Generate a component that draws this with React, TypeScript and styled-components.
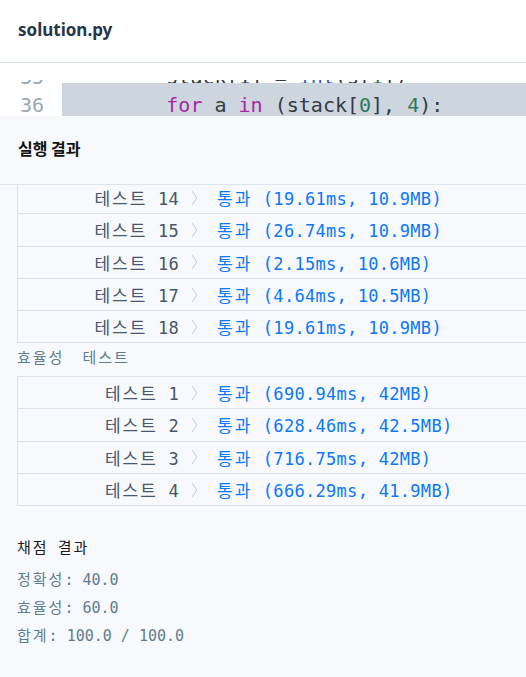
import React from 'react';
import styled, { createGlobalStyle } from 'styled-components';

const GlobalStyle = createGlobalStyle`
    html, body {
        margin: 0;
        padding: 0;
        background: #f8f9fc;
        overflow: hidden;
    }
`;

const MONO = `"DejaVu Sans Mono", "Noto Sans CJK KR", monospace`;

const Page = styled.div`
    width: 526px;
    height: 677px;
    display: flex;
    flex-direction: column;
    overflow: hidden;
`;

const FileHeader = styled.div`
    height: 63px;
    flex-shrink: 0;
    display: flex;
    align-items: center;
    padding: 0 18px 4px;
    box-sizing: border-box;
    background: #fff;
    border-bottom: 1px solid #d7e2eb;
    font-family: "Noto Sans", "Noto Sans CJK KR", sans-serif;
    font-size: 17px;
    font-weight: 700;
    color: #263747;
`;

const CodeSection = styled.div`
    flex-shrink: 0;
    background: #fff;
    padding-top: 17px;
`;

const CodeViewport = styled.div`
    height: 36px;
    overflow: hidden;
`;

// scrolled so that only the bottom of line 35 shows
const CodeLines = styled.div`
    margin-top: -17px;
    font-family: ${MONO};
    font-size: 20px;
    line-height: 28px;
    color: #333a42;
`;

const CodeRow = styled.div`
    display: flex;
`;

const Gutter = styled.div`
    width: 62px;
    flex-shrink: 0;
    box-sizing: border-box;
    padding-right: 18px;
    text-align: right;
    color: #9aa8b6;
`;

const CodeText = styled.div<{ $active?: boolean }>`
    flex: 1;
    padding-left: 8px;
    white-space: pre;
    background: ${(p) => (p.$active ? '#cdd6df' : 'transparent')};
    margin-top: ${(p) => (p.$active ? '-8px' : '0')};
    padding-top: ${(p) => (p.$active ? '8px' : '0')};
`;

const Kw = styled.span`
    color: #a626a4;
`;

const Num = styled.span`
    color: #2b7a57;
`;

const Builtin = styled.span`
    color: #2f5fa8;
`;

const ResultPanel = styled.div`
    flex: 1;
    display: flex;
    flex-direction: column;
    background: #f8f9fc;
    min-height: 0;
`;

const ResultHeader = styled.div`
    height: 69px;
    flex-shrink: 0;
    display: flex;
    align-items: center;
    padding: 0 18px 4px;
    box-sizing: border-box;
    border-bottom: 1px solid #dde4ec;
    font-family: "Noto Sans CJK KR", sans-serif;
    font-size: 16px;
    font-weight: 700;
    color: #111;
`;

const ResultBody = styled.div`
    flex: 1;
    overflow: hidden;
    padding-left: 17px;
    font-family: ${MONO};
`;

const ResultScroll = styled.div`
    margin-top: -4px;
`;

const Hangul = styled.span<{ $gap?: number }>`
    letter-spacing: ${(p) => p.$gap ?? 2}px;
`;

const TestBox = styled.div`
    border: 1px solid #d7e2eb;
    border-right: none;
`;

const TestRow = styled.div`
    display: grid;
    grid-template-columns: 161px 38px 1fr;
    align-items: center;
    height: 32.3px;
    box-sizing: border-box;
    border-bottom: 1px solid #d7e2eb;
    font-size: 17px;
    letter-spacing: 0.3px;
    white-space: pre;
    &:last-child {
        border-bottom: none;
        height: 31.3px;
    }
`;

const TestName = styled.div`
    text-align: right;
    color: #44576c;
`;

const Chevron = styled.div`
    display: flex;
    padding-left: 12px;
`;

const TestResult = styled.div`
    color: #0a78fa;
`;

const GroupLabel = styled.div`
    height: 32.5px;
    line-height: 30px;
    font-size: 15px;
    white-space: pre;
    color: #5f7d90;
`;

const ScoreTitle = styled.div`
    margin-top: 28px;
    margin-bottom: 4px;
    line-height: 28px;
    font-size: 15px;
    white-space: pre;
    color: #1b1b1b;
`;

const ScoreLine = styled.div`
    line-height: 28px;
    font-size: 15px;
    white-space: pre;
    color: #5f7d90;
`;

const accuracyTests = [
    { no: 14, result: '(19.61ms, 10.9MB)' },
    { no: 15, result: '(26.74ms, 10.9MB)' },
    { no: 16, result: '(2.15ms, 10.6MB)' },
    { no: 17, result: '(4.64ms, 10.5MB)' },
    { no: 18, result: '(19.61ms, 10.9MB)' },
];

const efficiencyTests = [
    { no: 1, result: '(690.94ms, 42MB)' },
    { no: 2, result: '(628.46ms, 42.5MB)' },
    { no: 3, result: '(716.75ms, 42MB)' },
    { no: 4, result: '(666.29ms, 41.9MB)' },
];

const ChevronIcon = () => (
    <svg width="7" height="16" viewBox="0 0 7 16">
        <polyline points="1,1 6,8 1,15" fill="none" stroke="#c3cbd3" strokeWidth="1" />
    </svg>
);

const TestList = ({ tests }: { tests: { no: number; result: string }[] }) => (
    <TestBox>
        {tests.map((t) => (
            <TestRow key={t.no}>
                <TestName>
                    <Hangul>테스트</Hangul> {t.no}
                </TestName>
                <Chevron>
                    <ChevronIcon />
                </Chevron>
                <TestResult>
                    <Hangul>통과</Hangul> {t.result}
                </TestResult>
            </TestRow>
        ))}
    </TestBox>
);

const App = () => {
    return (
        <>
            <GlobalStyle />
            <Page>
                <FileHeader>solution.py</FileHeader>
                <CodeSection>
                    <CodeViewport>
                        <CodeLines>
                            <CodeRow>
                                <Gutter>35</Gutter>
                                <CodeText>
                                    {'        stack[1] = '}
                                    <Builtin>int</Builtin>
                                    {'(s['}
                                    <Num>1</Num>
                                    {'])'}
                                </CodeText>
                            </CodeRow>
                            <CodeRow>
                                <Gutter>36</Gutter>
                                <CodeText $active>
                                    {'        '}
                                    <Kw>for</Kw>
                                    {' a '}
                                    <Kw>in</Kw>
                                    {' (stack['}
                                    <Num>0</Num>
                                    {'], '}
                                    <Num>4</Num>
                                    {'):'}
                                </CodeText>
                            </CodeRow>
                        </CodeLines>
                    </CodeViewport>
                </CodeSection>
                <ResultPanel>
                    <ResultHeader>실행 결과</ResultHeader>
                    <ResultBody>
                        <ResultScroll>
                            <TestList tests={accuracyTests} />
                            <GroupLabel>
                                <Hangul>효율성</Hangul>
                                {'  '}
                                <Hangul>테스트</Hangul>
                            </GroupLabel>
                            <TestList tests={efficiencyTests} />
                            <ScoreTitle>
                                <Hangul>채점</Hangul> <Hangul>결과</Hangul>
                            </ScoreTitle>
                            <ScoreLine>
                                <Hangul>정확성</Hangul>: 40.0
                            </ScoreLine>
                            <ScoreLine>
                                <Hangul>효율성</Hangul>: 60.0
                            </ScoreLine>
                            <ScoreLine>
                                <Hangul>합계</Hangul>: 100.0 / 100.0
                            </ScoreLine>
                        </ResultScroll>
                    </ResultBody>
                </ResultPanel>
            </Page>
        </>
    );
};

export default App;
